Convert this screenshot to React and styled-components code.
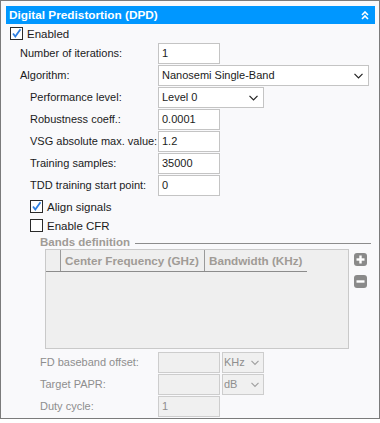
import React from "react";
import styled, { createGlobalStyle } from "styled-components";

const GlobalStyle = createGlobalStyle`
  body {
    margin: 0;
    background: #ffffff;
    font-family: "Liberation Sans", Arial, sans-serif;
    font-size: 11px;
    color: #1b1b1b;
  }
`;

const Panel = styled.div`
  width: 380px;
  height: 419px;
  box-sizing: border-box;
  border: 1px solid #7b7b7b;
  background: #f9f9fb;
  padding: 5px 4px 0 5px;
`;

const Header = styled.div`
  height: 18px;
  background: #0097ff;
  color: #ffffff;
  font-weight: bold;
  font-size: 11.8px;
  display: flex;
  align-items: center;
  justify-content: space-between;
  padding: 0 6px 0 3px;
`;

const CheckRow = styled.div`
  height: 19px;
  display: flex;
  align-items: center;
  gap: 4px;
  padding-left: ${(p) => p.indent}px;
  font-size: 11.5px;
`;

const Box = styled.span`
  width: 11px;
  height: 11px;
  border: 1px solid #2a2a2a;
  background: #ffffff;
  display: flex;
  align-items: center;
  justify-content: center;
`;

const Row = styled.div`
  height: 22px;
  display: flex;
  align-items: flex-start;
`;

const Label = styled.div`
  width: 152px;
  box-sizing: border-box;
  padding-left: ${(p) => p.indent}px;
  line-height: 21px;
  color: ${(p) => (p.disabled ? "#8e8e8e" : "#1b1b1b")};
  white-space: nowrap;
`;

const Field = styled.div`
  width: ${(p) => p.w}px;
  height: 21px;
  box-sizing: border-box;
  border: 1px solid ${(p) => (p.disabled ? "#cdcdcd" : "#c4c4c4")};
  background: ${(p) => (p.disabled ? "#f0f0f0" : "#ffffff")};
  color: ${(p) => (p.disabled ? "#8e8e8e" : "#1b1b1b")};
  padding-left: 3px;
  line-height: 19px;
`;

const Select = styled(Field)`
  display: flex;
  align-items: center;
  justify-content: space-between;
  padding-left: ${(p) => (p.disabled ? 1 : 3)}px;
  padding-right: ${(p) => (p.disabled ? 4 : 5)}px;
  margin-left: ${(p) => p.ml || 0}px;
`;

const Legend = styled.div`
  height: 14px;
  display: flex;
  align-items: center;
  padding: 0 4px 0 34px;
  color: #a09b96;
  font-weight: bold;
  font-size: 11.5px;
  &::after {
    content: "";
    flex: 1;
    height: 1px;
    background: #8c8c8c;
    margin-left: 5px;
    margin-top: 2px;
  }
`;

const TableArea = styled.div`
  display: flex;
  padding-left: 39px;
  margin-bottom: 3px;
`;

const Table = styled.div`
  width: 304px;
  height: 100px;
  box-sizing: border-box;
  border: 1px solid #c9c9c9;
  background: #efefef;
`;

const HeadRow = styled.div`
  width: 261px;
  height: 21px;
  display: flex;
  border-bottom: 1px solid #8c8c8c;
`;

const HeadCell = styled.div`
  width: ${(p) => p.w}px;
  box-sizing: border-box;
  border-right: ${(p) => (p.last ? "none" : "1px solid #9a9a9a")};
  color: #a09b96;
  font-weight: bold;
  font-size: 11.7px;
  line-height: 21px;
  padding-left: 4px;
  white-space: nowrap;
`;

const Tools = styled.div`
  display: flex;
  flex-direction: column;
  gap: 9px;
  padding: 4px 0 0 5px;
`;

const ToolButton = styled.span`
  width: 13px;
  height: 13px;
  border-radius: 3px;
  background: #8a8a8a;
  display: flex;
  align-items: center;
  justify-content: center;
`;

const Chevron = ({ color = "#222", w = 9 }) => (
  <svg width={w} height="6" viewBox={`0 0 ${w} 6`}>
    <polyline
      points={`0.5,0.8 ${w / 2},${w / 2 + 0.3} ${w - 0.5},0.8`}
      fill="none"
      stroke={color}
      strokeWidth="1.2"
    />
  </svg>
);

const Check = ({ on }) => (
  <Box>
    {on && (
      <svg width="11" height="11" viewBox="0 0 11 11">
        <polyline points="2,5.5 4.3,8.5 9.5,1.2" fill="none" stroke="#2f7fe0" strokeWidth="1.8" />
      </svg>
    )}
  </Box>
);

const fields = [
  { label: "Robustness coeff.:", value: "0.0001" },
  { label: "VSG absolute max. value:", value: "1.2" },
  { label: "Training samples:", value: "35000" },
  { label: "TDD training start point:", value: "0" },
];

export default function App() {
  return (
    <>
      <GlobalStyle />
      <Panel>
        <Header>
          <span>Digital Predistortion (DPD)</span>
          <svg width="8" height="9" viewBox="0 0 8 9">
            <polyline points="1,4 4,1 7,4" fill="none" stroke="#fff" strokeWidth="1.6" />
            <polyline points="1,8 4,5 7,8" fill="none" stroke="#fff" strokeWidth="1.6" />
          </svg>
        </Header>

        <CheckRow indent={4}>
          <Check on />
          <span>Enabled</span>
        </CheckRow>

        <Row>
          <Label indent={14}>Number of iterations:</Label>
          <Field w={62}>1</Field>
        </Row>
        <Row>
          <Label indent={14}>Algorithm:</Label>
          <Select w={211}>
            <span>Nanosemi Single-Band</span>
            <Chevron />
          </Select>
        </Row>
        <Row>
          <Label indent={24}>Performance level:</Label>
          <Select w={106}>
            <span>Level 0</span>
            <Chevron />
          </Select>
        </Row>
        {fields.map((f) => (
          <Row key={f.label}>
            <Label indent={24}>{f.label}</Label>
            <Field w={62}>{f.value}</Field>
          </Row>
        ))}

        <CheckRow indent={24}>
          <Check on />
          <span>Align signals</span>
        </CheckRow>
        <CheckRow indent={24}>
          <Check />
          <span>Enable CFR</span>
        </CheckRow>

        <Legend>Bands definition</Legend>
        <TableArea>
          <Table>
            <HeadRow>
              <HeadCell w={15} />
              <HeadCell w={144}>Center Frequency (GHz)</HeadCell>
              <HeadCell w={102} last>Bandwidth (KHz)</HeadCell>
            </HeadRow>
          </Table>
          <Tools>
            <ToolButton>
              <svg width="9" height="9" viewBox="0 0 9 9">
                <rect x="3.3" y="0.5" width="2.4" height="8" fill="#fff" />
                <rect x="0.5" y="3.3" width="8" height="2.4" fill="#fff" />
              </svg>
            </ToolButton>
            <ToolButton>
              <svg width="9" height="9" viewBox="0 0 9 9">
                <rect x="0.5" y="3.3" width="8" height="2.4" fill="#fff" />
              </svg>
            </ToolButton>
          </Tools>
        </TableArea>

        <Row>
          <Label indent={34} disabled>FD baseband offset:</Label>
          <Field w={62} disabled />
          <Select w={42} ml={2} disabled>
            <span>KHz</span>
            <Chevron color="#a0a0a0" w={8} />
          </Select>
        </Row>
        <Row>
          <Label indent={34} disabled>Target PAPR:</Label>
          <Field w={62} disabled />
          <Select w={42} ml={2} disabled>
            <span>dB</span>
            <Chevron color="#a0a0a0" w={8} />
          </Select>
        </Row>
        <Row>
          <Label indent={34} disabled>Duty cycle:</Label>
          <Field w={62} disabled>1</Field>
        </Row>
      </Panel>
    </>
  );
}
